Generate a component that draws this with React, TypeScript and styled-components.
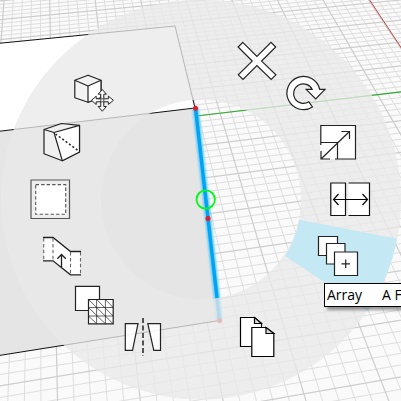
import React from "react";
import styled, { createGlobalStyle } from "styled-components";

const GlobalStyle = createGlobalStyle`
  html, body { margin: 0; padding: 0; overflow: hidden; }
`;

const Viewport = styled.main`
  position: relative;
  width: 401px;
  height: 401px;
  overflow: hidden;
  background: #fafafa;
`;

const Layer = styled.svg`
  position: absolute;
  inset: 0;
  width: 401px;
  height: 401px;
  pointer-events: none;
`;

const MenuItem = styled.button<{ $x: number; $y: number; $w: number; $h: number }>`
  position: absolute;
  left: ${(p) => p.$x}px;
  top: ${(p) => p.$y}px;
  width: ${(p) => p.$w}px;
  height: ${(p) => p.$h}px;
  padding: 0;
  border: 0;
  background: transparent;
`;

const Glyph = styled.svg`
  display: block;
  width: 100%;
  height: 100%;
  fill: #fff;
  stroke: #222;
  stroke-width: 1.2;
`;

const Tooltip = styled.div`
  position: absolute;
  left: 324px;
  top: 283px;
  width: 110px;
  height: 24px;
  box-sizing: border-box;
  display: flex;
  align-items: center;
  gap: 20px;
  padding-left: 2px;
  border: 1px solid #000;
  background: #fff;
  box-shadow: 3px 3px 3px rgba(0, 0, 0, 0.4);
  color: #000;
  font: 14px/24px "Open Sans", "Noto Sans", sans-serif;
  white-space: nowrap;
`;

const HORIZON = -490;

function Grid() {
  const minor: string[] = [];
  const major: string[] = [];
  for (let k = -45; k <= 45; k++) {
    const y = HORIZON + 64500 / (106.5 - k);
    const slope = (HORIZON - y) / 5150;
    (k % 5 === 0 ? major : minor).push(`M-10 ${y - 210 * slope}L410 ${y + 210 * slope}`);
  }
  for (let j = -60; j <= 10; j++) {
    const dx = (406 + j * 11.26) / 605.5;
    (j % 5 === 0 ? major : minor).push(
      `M${40 + dx * 480} -10L${40 + dx * 900} 410`
    );
  }
  return (
    <g fill="none">
      <path d={minor.join("")} stroke="#dedede" strokeWidth="1" />
      <path d={major.join("")} stroke="#cdcdcd" strokeWidth="1.2" />
    </g>
  );
}

function Scene() {
  return (
    <Layer viewBox="0 0 401 401">
      <defs>
        <filter id="glow" x="-100%" width="300%">
          <feGaussianBlur stdDeviation="1.3" />
        </filter>
      </defs>
      <Grid />
      <path d="M369 -1L402 49" stroke="#c64848" />
      <path d="M196 116L402 91.8" stroke="#2fae2f" strokeWidth="1.1" />
      <path d="M-1 43.3L175 26L195 108L-1 131.3Z" fill="#fff" />
      <path d="M-1 131.3L195 108L219.5 320.5L-1 355.5Z" fill="#e5e5e5" />
      <path
        d="M-1 43.3L175 26L195 108L-1 131.3M-1 355.5L219.5 320.5"
        fill="none"
        stroke="#111"
      />
      <path d="M195.5 108L219.5 320" stroke="#5cc8fa" strokeWidth="6" filter="url(#glow)" />
      <path d="M195.5 108L219.5 320" stroke="#00a4f2" strokeWidth="3.4" />
      <g fill="#963a50" stroke="#ee1c24" strokeWidth="1.5">
        <circle cx="195.5" cy="108.3" r="1.8" />
        <circle cx="208" cy="218.6" r="1.8" />
        <circle cx="219.6" cy="320.6" r="1.8" />
      </g>
    </Layer>
  );
}

function Ring() {
  return (
    <Layer viewBox="0 0 401 401">
      <path
        fillRule="evenodd"
        fill="#e9e9e9"
        fillOpacity="0.77"
        d="M1 199.5a200 200 0 1 0 400 0a200 200 0 1 0 -400 0ZM101 199.5a100 100 0 1 0 200 0a100 100 0 1 0 -200 0Z"
      />
      <path d="M299.3 219.7L397 238.7A200 200 0 0 1 368 311L285 256A100 100 0 0 0 299.3 219.7Z" fill="#c4e8f4" />
      <circle cx="205.7" cy="199.5" r="9.2" fill="none" stroke="#00fa14" strokeWidth="1.8" />
    </Layer>
  );
}

type Item = { name: string; box: [number, number, number, number]; art: React.ReactNode };

const items: Item[] = [
  {
    name: "Delete",
    box: [236, 40, 42, 42],
    art: <path d="M242.8 42.3L256.9 56.4L271 42.3L275.7 47L261.6 61.1L275.9 74.8L271.2 79.5L256.9 65.6L243 79.5L238.3 74.8L252.2 61.1L238.1 47Z" />,
  },
  {
    name: "Rotate",
    box: [284, 73, 44, 40],
    art: <path d="M312.5 107A16.6 16.6 0 1 1 319.7 89.4H325L315.7 99L306.2 89.4H312.2A9.8 9.8 0 1 0 308.8 101.8Z" />,
  },
  {
    name: "Scale",
    box: [318, 123, 40, 39],
    art: (
      <>
        <path stroke="none" d="M320.5 125.5H355.5V159H320.5Z" />
        <path fill="none" d="M320.8 145V125.5H355.5V159H335M330 159H321V151M320.8 142.5H337.5V159M321 159L349.5 131.5M341.5 131.5H349.5V139" />
      </>
    ),
  },
  {
    name: "Stretch",
    box: [328, 180, 44, 38],
    art: (
      <>
        <path d="M330.8 183H345.5V215.5H330.8ZM348.5 183H369.5V215.5H348.5" stroke="#111" />
        <path fill="none" stroke="#000" d="M334 199.5H367M338.5 194L333.5 199.5L338.5 205M362.5 194L367.5 199.5L362.5 205" />
      </>
    ),
  },
  {
    name: "Array",
    box: [316, 234, 44, 44],
    art: (
      <>
        <path d="M318.5 236.5H337.5V255.5H318.5Z" />
        <path d="M326.5 243.5H345V264H326.5Z" />
        <path d="M334.5 252H357.5V275.5H334.5Z" />
        <path fill="none" d="M341.5 263.8H350M345.7 259.5V268" />
      </>
    ),
  },
  {
    name: "Duplicate",
    box: [238, 315, 40, 44],
    art: (
      <g stroke="#000">
        <path d="M240.5 317.5H254.5L261.5 323.5V346.5H240.5Z" />
        <path d="M254.5 317.5V323.5H261.5Z" fill="#ddd" />
        <path d="M251.8 327.5H266L273.8 333.5V356.5H251.8Z" />
        <path d="M266 327.5V333.5H273.8Z" fill="#ddd" />
      </g>
    ),
  },
  {
    name: "Mirror",
    box: [122, 315, 42, 44],
    art: (
      <g fillOpacity="0.85">
        <path d="M125.3 323.6H138L132.5 350.3H125.3Z" />
        <path d="M147.8 323.6H160.5V350.3H153.8Z" />
        <path d="M143 318V356" strokeWidth="1.5" strokeDasharray="5 2.5" />
      </g>
    ),
  },
  {
    name: "Tessellate",
    box: [73, 284, 42, 42],
    art: (
      <>
        <path d="M75.5 286.3H99.5V310.5H75.5Z" />
        <path d="M88.5 299.5H113.2V323.8H88.5Z" />
        <path strokeWidth=".7" fill="none" d="M96.6 299.5V323.8M105.4 299.5V323.8M88.5 307.5H113.2M88.5 316H113.2M88.5 299.5L113.2 323.8M96.6 299.5L113.2 316M105.4 299.5L113.2 307.5M88.5 307.5L105.4 323.8M88.5 316L96.6 323.8" />
      </>
    ),
  },
  {
    name: "Offset step",
    box: [41, 235, 43, 42],
    art: (
      <>
        <path stroke="none" d="M43.5 237.5H53L70.5 251.5H80.5V274.8H70.5L53 260.8H43.5Z" />
        <path fill="none" strokeWidth="1.3" d="M43 237.5H53L70.5 251.5H81M43 260.8H53L70.5 274.8H81M61.5 267.5V255M57.3 258.8L61.5 254.5L65.8 258.8" />
        <path fill="none" strokeWidth="1.1" stroke="#666" strokeDasharray="3.5 2.4" d="M43.7 238V261M53 238V261M70.5 252V275M80.5 252V275" />
      </>
    ),
  },
  {
    name: "Inset",
    box: [29, 178, 42, 42],
    art: (
      <>
        <path fill="#eee" stroke="#555" d="M31 180H69.5V218.5H31Z" />
        <path strokeWidth="1.1" stroke="#555" strokeDasharray="3.3 2.2" d="M35.7 184.6H65.7V214.3H35.7Z" />
      </>
    ),
  },
  {
    name: "Chamfer",
    box: [42, 121, 40, 42],
    art: (
      <g strokeLinejoin="round">
        <path d="M44 129.5L61.5 123.5L79.5 125.3V152L62.3 160.7L44 153.8Z" fill="#f0f0f0" />
        <path d="M54 132.5L79.5 125.3V152L62.3 160.7Z" />
        <path fill="none" d="M44 129.5L54 132.5" />
        <path fill="none" strokeWidth="1.5" strokeDasharray="2 2.2" d="M55.5 134L78 150.5" />
      </g>
    ),
  },
  {
    name: "Move",
    box: [73, 73, 42, 40],
    art: (
      <>
        <g fill="#f3f3f3" strokeLinejoin="round">
          <path d="M74.8 80.3L88 75.2L101 80.3V97.5L88 102.3L74.8 97.8Z" />
          <path d="M88 86L101 80.3V97.5L88 102.3Z" fill="#fff" />
          <path fill="none" d="M74.8 80.3L88 86" />
        </g>
        <path strokeWidth="1" d="M102.3 89.5L106.4 94.2H103.8V98.8H108.4V96.2L113.4 100.3L108.4 104.5V101.8H103.8V106.5H106.4L102.3 111.2L98.2 106.5H100.8V101.8H96.2V104.5L91.5 100.3L96.2 96.2V98.8H100.8V94.2H98.2Z" />
        <path strokeWidth=".8" d="M100.8 98.8H103.8V101.8H100.8Z" />
      </>
    ),
  },
];

export default function App() {
  return (
    <>
      <GlobalStyle />
      <Viewport>
        <Scene />
        <Ring />
        {items.map(({ name, box: [x, y, w, h], art }) => (
          <MenuItem key={name} aria-label={name} $x={x} $y={y} $w={w} $h={h}>
            <Glyph viewBox={`${x} ${y} ${w} ${h}`}>{art}</Glyph>
          </MenuItem>
        ))}
        <Tooltip role="tooltip">
          <span>Array</span>
          <span>A F</span>
        </Tooltip>
      </Viewport>
    </>
  );
}
